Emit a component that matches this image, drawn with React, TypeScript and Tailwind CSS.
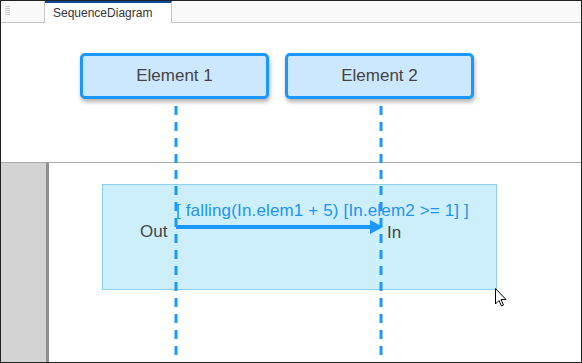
export default function App() {
  const font = { fontFamily: '"Liberation Sans", Arial, sans-serif' }

  return (
    <div
      className="relative w-[582px] h-[363px] border border-[#222] bg-white flex flex-col overflow-hidden"
      style={font}
    >
      {/* tab strip */}
      <div className="h-[22px] flex border-b border-[#c4c4c4] bg-[#f9f9f9]">
        <div className="w-[44px] border-r border-[#c8c8c8] flex flex-col gap-[1px] pl-[4px] pt-[5px]">
          <div className="w-[5px] h-[1px] bg-[#c8c8c8]" />
          <div className="w-[5px] h-[1px] bg-[#c8c8c8]" />
          <div className="w-[5px] h-[1px] bg-[#c8c8c8]" />
          <div className="w-[5px] h-[1px] bg-[#c8c8c8]" />
          <div className="w-[5px] h-[1px] bg-[#c8c8c8]" />
        </div>
        <div className="w-[127px] -mb-[1px] bg-white border-t-2 border-t-[#0d4f9e] border-r border-r-[#c4c4c4] pl-[8px] pt-[3px] text-[12px] leading-[14px] text-[#333]">
          SequenceDiagram
        </div>
        <div className="flex-1" />
      </div>

      {/* lifeline heads area */}
      <div className="h-[140px] border-b border-[#a9a9a9]" />

      {/* body area */}
      <div className="flex-1 flex">
        <div className="w-[45px] bg-[#d3d3d3]" />
        <div className="w-[3px] bg-[#8f8f8f]" />
        <div className="flex-1 bg-white" />
      </div>

      {/* diagram canvas */}
      <div className="absolute left-[101px] top-[183px] w-[395px] h-[106px] bg-[#cdeffc] border border-[#8ccff5]" />

      <svg className="absolute left-0 top-0" width="580" height="361">
        <line x1="175" y1="105" x2="175" y2="361" stroke="#1a98ff" strokeWidth="3" strokeDasharray="9 7" />
        <line x1="380" y1="105" x2="380" y2="361" stroke="#1a98ff" strokeWidth="3" strokeDasharray="9 7" />
        <line x1="175" y1="226" x2="372" y2="226" stroke="#1a98ff" strokeWidth="4" />
        <polygon points="369,219 382,226 369,233" fill="#1a98ff" />
        <path
          d="M494.5 287.5 L494.5 303 L498 299.5 L500.5 305 L502.5 304 L500 298.5 L505 298.5 Z"
          fill="white"
          stroke="black"
          strokeWidth="1"
          strokeLinejoin="miter"
        />
      </svg>

      <div className="absolute left-[79px] top-[52px] w-[189px] h-[46px] rounded-[5px] border-[3px] border-[#1a98ff] bg-[#cce8ff] shadow-[1px_3px_4px_rgba(0,0,0,0.3)] flex items-center justify-center text-[17px] text-[#444]">
        Element 1
      </div>
      <div className="absolute left-[284px] top-[52px] w-[189px] h-[46px] rounded-[5px] border-[3px] border-[#1a98ff] bg-[#cce8ff] shadow-[1px_3px_4px_rgba(0,0,0,0.3)] flex items-center justify-center text-[17px] text-[#444]">
        Element 2
      </div>

      <div className="absolute left-[175px] top-[200px] text-[17px] leading-[19px] tracking-[0.15px] text-[#1e93f2] whitespace-nowrap">
        [ falling(In.elem1 + 5) [In.elem2 &gt;= 1] ]
      </div>
      <div className="absolute left-[139px] top-[221px] text-[17px] leading-[19px] text-[#444]">
        Out
      </div>
      <div className="absolute left-[386px] top-[222px] text-[17px] leading-[19px] text-[#444]">
        In
      </div>
    </div>
  )
}
